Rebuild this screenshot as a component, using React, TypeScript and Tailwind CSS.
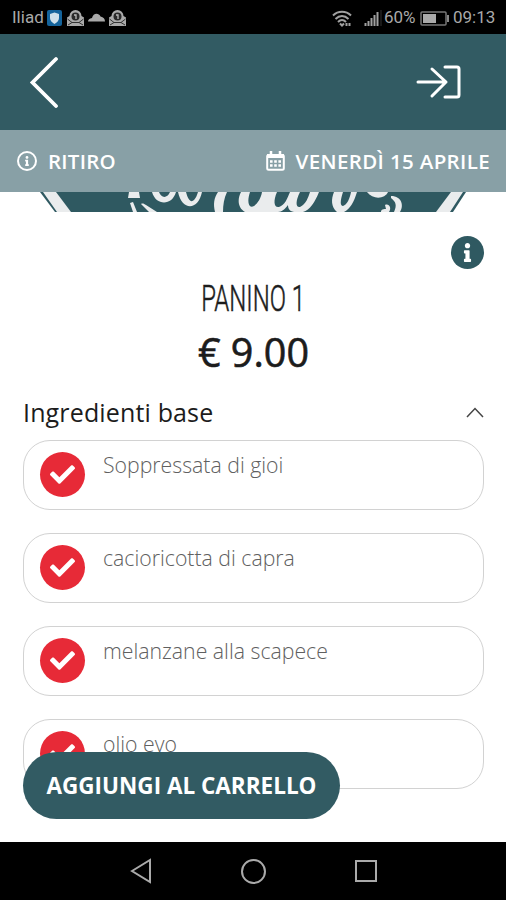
import React, { useState } from "react";
import { FaCheck, FaInfo } from "react-icons/fa";

interface Ingredient {
  id: number;
  name: string;
}

const ingredients: Ingredient[] = [
  { id: 1, name: "Soppressata di gioi" },
  { id: 2, name: "cacioricotta di capra" },
  { id: 3, name: "melanzane alla scapece" },
  { id: 4, name: "olio evo" },
];

const MailBadge = () => (
  <svg width="19" height="18" viewBox="0 0 19 18">
    <path d="M1 8.500L3.500 7a6 6 0 0 1 12 0L18 8.500V17H1z" fill="#aaa" />
    <path d="M1.500 10L6 13.500 2 16M17.500 10L13 13.500l4 2.500M6 13.500h7" stroke="#333" fill="none" />
    <circle cx="9.500" cy="7.500" r="4" fill="#2a2a2a" />
    <path d="M8 6h2v4" stroke="#bbb" strokeWidth="1.300" fill="none" />
  </svg>
);

const StatusBar = () => (
  <div className="flex h-[34px] shrink-0 items-center justify-between bg-black pl-3 pr-[11px] pt-0.5 font-[Roboto] text-[17px] text-[#a9a9a9]">
    <div className="flex items-center">
      <span className="w-[35px]">Iliad</span>
      <svg width="15" height="16" viewBox="0 0 15 16">
        <rect width="15" height="16" rx="2" fill="#14639b" />
        <path d="M7.500 2.500L12 4v4c0 2.500-2 4.500-4.500 6C5 12.500 3 10.500 3 8V4z" fill="#cfe0ea" />
      </svg>
      <span className="ml-1"><MailBadge /></span>
      <svg className="ml-[3px]" width="17" height="10" viewBox="0 0 17 10">
        <path d="M0 8.500c0-2 1.500-3 4-3.500C5-.5 11-.5 12.500 3.500c3 .5 4.500 2.500 4.500 5z" fill="#a9a9a9" />
      </svg>
      <span className="ml-[3px]"><MailBadge /></span>
    </div>
    <div className="flex items-center">
      <svg width="20" height="17" viewBox="0 0 20 17" fill="none" stroke="#a0a0a0" strokeWidth="2">
        <path d="M1 5.500c5-5 13-5 18 0M3.500 9c4-4 9-4 13 0M6 12c2.500-2.500 5.500-2.500 8 0" />
        <path d="M8 13.500l2 2 2-2M14.500 13v3M17.500 13v3" />
      </svg>
      <svg className="ml-3" width="18" height="16" viewBox="0 0 18 16" stroke="#a0a0a0" strokeWidth="2">
        <path d="M1.500 16v-3M4.500 16v-5M7.500 16V8M10.500 16V5M13.500 16V2" />
        <path d="M17 0v16" stroke="#333" strokeWidth="1" />
      </svg>
      <span className="ml-0.5 w-[32px] whitespace-nowrap">60%</span>
      <svg className="ml-1" width="29" height="15" viewBox="0 0 29 15">
        <rect x="1" y="1" width="25" height="13" rx="1" fill="none" stroke="#777" strokeWidth="1.500" />
        <rect x="3" y="3" width="13" height="9" fill="#aaa" />
        <path d="M28 4v7" stroke="#888" strokeWidth="2" />
      </svg>
      <span className="ml-1 w-[42px] whitespace-nowrap">09:13</span>
    </div>
  </div>
);

// Bottom edge of the shop logo, still peeking out under the toolbar
const Banner = () => (
  <svg className="block h-5 w-full shrink-0" viewBox="0 0 506 20">
    <path d="M40 0H466L453 20H55z" fill="#2f5961" />
    <path d="M43 0H56L71 20H57zM451 0H463L450 20H436z" fill="#eaeced" />
    <g fill="#eaeced">
      <path d="M129 0h10l1 6h-12zM130 11l3-1 4 10h-4zM141 12c2-1 3 0 5 1l11 7h-8z" />
      <path d="M152 0h7c2 6 8 7 11 0h6c-4 14-20 14-24 0z" />
      <path d="M178 0h8c2 8 5 11 8 8 2-2 3-5 4-8h4c-4 19-20 19-24 0z" />
      <path d="M218 0h9c-3 6-4 13-4 20h-8c-2-8-1-14 3-20z" />
      <path d="M241 0h9c-3 9-2 17 4 14 4-3 7-8 8-14h13c-4 8-4 14-1 18l-2 2h-27c-7-4-8-12-4-20z" />
      <path d="M267 0h10c-4 9-3 16 2 15 6-2 8-8 11-15h10c-5 10-4 16 0 15 6-3 8-9 10-15h9c-4 10-9 18-16 20h-9c-5-1-6-4-6-7-3 4-6 7-10 7h-7c-7-4-7-12-4-20z" />
      <path d="M334 0h9c-3 9-3 14 0 14 4-1 7-8 8-14h6c-3 10-7 17-13 20h-7c-6-5-6-13-3-20z" />
      <path d="M367 0h21c-3 7-15 8-21 0z" />
      <path d="M385 13c4-2 7 3 4 7h-8c0-2 1-3 5-3zM391 4c11 0 13 10 9 16h-6c3-7 2-10-3-14z" />
    </g>
  </svg>
);

const App: React.FC = () => {
  const [open, setOpen] = useState(true);
  const [selected, setSelected] = useState<number[]>([1, 2, 3, 4]);

  const toggle = (id: number) => {
    setSelected(selected.includes(id) ? selected.filter(s => s !== id) : [...selected, id]);
  };

  return (
    <div className="relative flex h-[900px] w-[506px] flex-col overflow-hidden bg-white font-['Open_Sans',sans-serif] text-[#1c1c1c]">
      <StatusBar />
      <header className="flex h-24 shrink-0 items-center justify-between bg-[#325b63] pl-[29px] pr-[45px]">
        <button aria-label="Indietro">
          <svg width="30" height="52" viewBox="0 0 30 52" fill="none" stroke="white" strokeWidth="3.800" strokeLinecap="round">
            <path d="M27 3L3.500 26.500 27 50" />
          </svg>
        </button>
        <button aria-label="Accedi">
          <svg width="46" height="36" viewBox="0 0 46 36" fill="none" stroke="white" strokeWidth="3" strokeLinecap="round" strokeLinejoin="round">
            <path d="M3 18h28M17 5l14 13-14 14M30 3h12q2 0 2 2v26q0 2-2 2H30" />
          </svg>
        </button>
      </header>
      <div className="flex h-[62px] shrink-0 items-center justify-between bg-[#88a0a6] pl-[17px] pr-4 text-[20.500px] font-semibold text-white">
        <div className="flex items-center gap-[11px]">
          <span className="flex h-5 w-5 items-center justify-center rounded-full border-2 border-white">
            <FaInfo size={10} />
          </span>
          <span className="pt-px tracking-[0.25px]">RITIRO</span>
        </div>
        <div className="flex items-center gap-[11px]">
          <svg width="19" height="20" viewBox="0 0 19 20" fill="none" stroke="white">
            <rect x="1.200" y="4" width="16.600" height="14.800" rx="1.500" strokeWidth="2" />
            <path d="M1 5h17" strokeWidth="4" />
            <path d="M5 0v5M14 0v5" strokeWidth="2.500" />
            <path d="M4 10.500h11M4 14.500h11" strokeWidth="2.500" strokeDasharray="2.600 1.600" />
          </svg>
          <span className="pt-px tracking-[0.360px]">VENERDÌ 15 APRILE</span>
        </div>
      </div>
      <Banner />
      <main className="flex h-[630px] shrink-0 flex-col pl-[23px] pr-[22px]">
        <div className="flex h-16 shrink-0 items-end justify-end pb-[7px]">
          <button aria-label="Informazioni" className="flex h-[33px] w-[33px] items-center justify-center rounded-full bg-[#2f5961] text-white">
            <FaInfo size={19} />
          </button>
        </div>
        <h1 className="flex h-11 shrink-0 items-center justify-center pt-0.5 font-[Roboto] text-[36px] font-light leading-none [-webkit-text-stroke:0.500px_#1c1c1c]">
          <span className="scale-x-[0.665] whitespace-nowrap">PANINO 1</span>
        </h1>
        <p className="flex h-[66px] shrink-0 items-center justify-center text-[39.500px] [-webkit-text-stroke:0.6px_#1c1c1c]">€ 9.00</p>
        <button onClick={() => setOpen(!open)} className="flex h-[54px] shrink-0 items-center justify-between text-[25px]">
          <span className="tracking-[0.150px]">Ingredienti base</span>
          <svg className={open ? "" : "rotate-180"} width="18" height="12" viewBox="0 0 18 12" fill="none" stroke="#444" strokeWidth="1.500">
            <path d="M1 10L9 1.500l8 8.500" />
          </svg>
        </button>
        {open && (
          <div className="flex flex-col gap-[22.900px]">
            {ingredients.map(item => (
              <div key={item.id} onClick={() => toggle(item.id)} className="flex h-[70px] shrink-0 gap-[18px] rounded-[27px] border-[1.500px] border-[#d2d2d2] pl-4">
                <span className="mt-[11px] flex h-[45px] w-[45px] items-center justify-center rounded-full bg-[#e72a37] text-white">
                  {selected.includes(item.id) && <FaCheck size={25} />}
                </span>
                <span className="mt-2 text-[21.250px] font-light leading-[32px] text-[#606060]">{item.name}</span>
              </div>
            ))}
          </div>
        )}
      </main>
      <button className="absolute left-[23px] top-[752px] flex h-[67px] w-[317px] items-center justify-center whitespace-nowrap rounded-full bg-[#325b63] text-[22.500px] font-bold text-white">
        AGGIUNGI AL CARRELLO
      </button>
      <nav className="flex h-[58px] shrink-0 items-center bg-black pl-[130px]">
        <svg width="22" height="26" viewBox="0 0 22 26" fill="none" stroke="#aaa" strokeWidth="2">
          <path d="M2 13L20 2v22z" />
        </svg>
        <span className="ml-[89px] h-[25px] w-[25px] rounded-full border-2 border-[#aaa]" />
        <span className="ml-[89px] h-[22px] w-[22px] border-2 border-[#aaa]" />
      </nav>
    </div>
  );
};

export default App;
